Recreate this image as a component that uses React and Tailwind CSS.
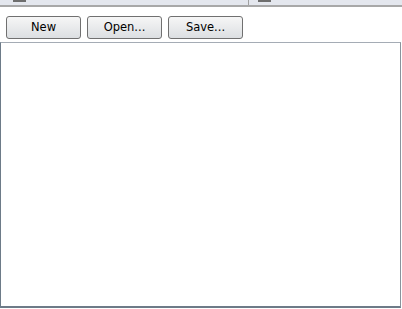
export default function App() {
  const btn =
    "w-[75px] h-[23px] rounded-[3px] border border-[#707070] bg-gradient-to-b from-[#f6f6f6] to-[#dcdfe2] text-[11.5px] text-[#000] flex items-center justify-center leading-none";
  return (
    <div className="w-[402px] h-[309px] bg-white overflow-hidden" style={{ fontFamily: '"DejaVu Sans", Tahoma, sans-serif' }}>
      <div className="h-[5px] bg-[#e4e7ee] flex items-start">
        <div className="ml-[13px] w-[13px] h-[2px] bg-[#6e6e6e]" />
        <div className="ml-[222px] w-[1px] h-[5px] bg-[#a0a0a0]" />
        <div className="ml-[9px] w-[13px] h-[2px] bg-[#6e6e6e]" />
      </div>
      <div className="h-[2px] bg-[#a8a8a8]" />
      <div className="flex gap-[6px] pl-[6px] pt-[9px]">
        <button className={btn}>New</button>
        <button className={btn}>Open...</button>
        <button className={btn}>Save...</button>
      </div>
      <div className="mt-[3px] w-[401px] h-[266px] border border-[#a5acb5] border-b-[#6d7b88] border-l-[#6d7b88] border-r-[#8a939c] border-b-2 bg-white" />
    </div>
  );
}
